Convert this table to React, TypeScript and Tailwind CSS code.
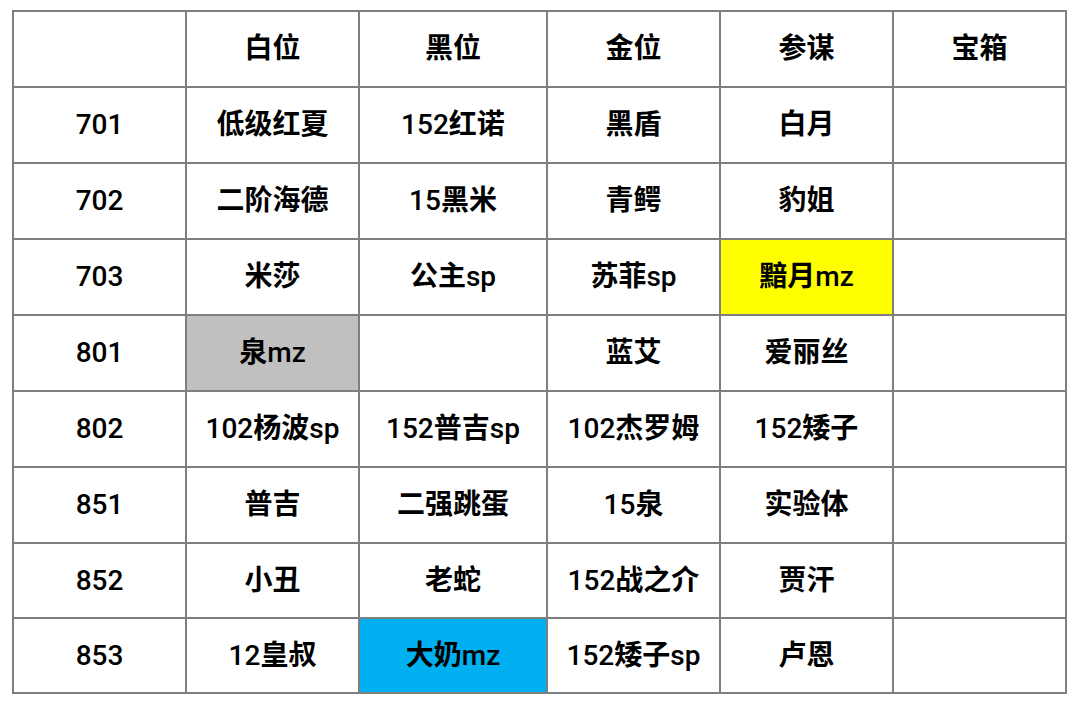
import React from 'react';

type Cell = { text: string; bg?: string };

const HEADER = ['', '白位', '黑位', '金位', '参谋', '宝箱'];

const ROWS: Cell[][] = [
  [{ text: '701' }, { text: '低级红夏' }, { text: '152红诺' }, { text: '黑盾' }, { text: '白月' }, { text: '' }],
  [{ text: '702' }, { text: '二阶海德' }, { text: '15黑米' }, { text: '青鳄' }, { text: '豹姐' }, { text: '' }],
  [{ text: '703' }, { text: '米莎' }, { text: '公主sp' }, { text: '苏菲sp' }, { text: '黯月mz', bg: 'bg-[#ffff00]' }, { text: '' }],
  [{ text: '801' }, { text: '泉mz', bg: 'bg-[#c0c0c0]' }, { text: '' }, { text: '蓝艾' }, { text: '爱丽丝' }, { text: '' }],
  [{ text: '802' }, { text: '102杨波sp' }, { text: '152普吉sp' }, { text: '102杰罗姆' }, { text: '152矮子' }, { text: '' }],
  [{ text: '851' }, { text: '普吉' }, { text: '二强跳蛋' }, { text: '15泉' }, { text: '实验体' }, { text: '' }],
  [{ text: '852' }, { text: '小丑' }, { text: '老蛇' }, { text: '152战之介' }, { text: '贾汗' }, { text: '' }],
  [{ text: '853' }, { text: '12皇叔' }, { text: '大奶mz', bg: 'bg-[#00b0f0]' }, { text: '152矮子sp' }, { text: '卢恩' }, { text: '' }],
];

// latin runs in Roboto medium, CJK runs bold
function Label({ text }: { text: string }) {
  const parts = text.match(/[\x00-\x7f]+|[^\x00-\x7f]+/g) ?? [];
  return (
    <span>
      {parts.map((p, i) =>
        /^[\x00-\x7f]+$/.test(p) ? (
          <span key={i} className="font-medium">{p}</span>
        ) : (
          <span key={i} className="font-bold">{p}</span>
        )
      )}
    </span>
  );
}

export default function App() {
  return (
    <div className="w-[1079px] h-[704px] bg-white pt-[10px] pl-[12px] font-['Roboto','Noto_Sans_CJK_SC',sans-serif]">
      <div className="inline-grid grid-cols-[171px_171px_186px_171px_171px_171px] grid-rows-[74px_74px_74px_74px_74px_74px_74px_73px_73px] gap-[2px] p-[2px] bg-[#7f7f7f]">
        {HEADER.map((h, i) => (
          <div key={`h${i}`} className="bg-white flex items-center justify-center text-[28px] text-black">
            <Label text={h} />
          </div>
        ))}
        {ROWS.map((row, r) =>
          row.map((c, i) => (
            <div
              key={`${r}-${i}`}
              className={`${c.bg ?? 'bg-white'} flex items-center justify-center text-[28px] text-black`}
            >
              <Label text={c.text} />
            </div>
          ))
        )}
      </div>
    </div>
  );
}
